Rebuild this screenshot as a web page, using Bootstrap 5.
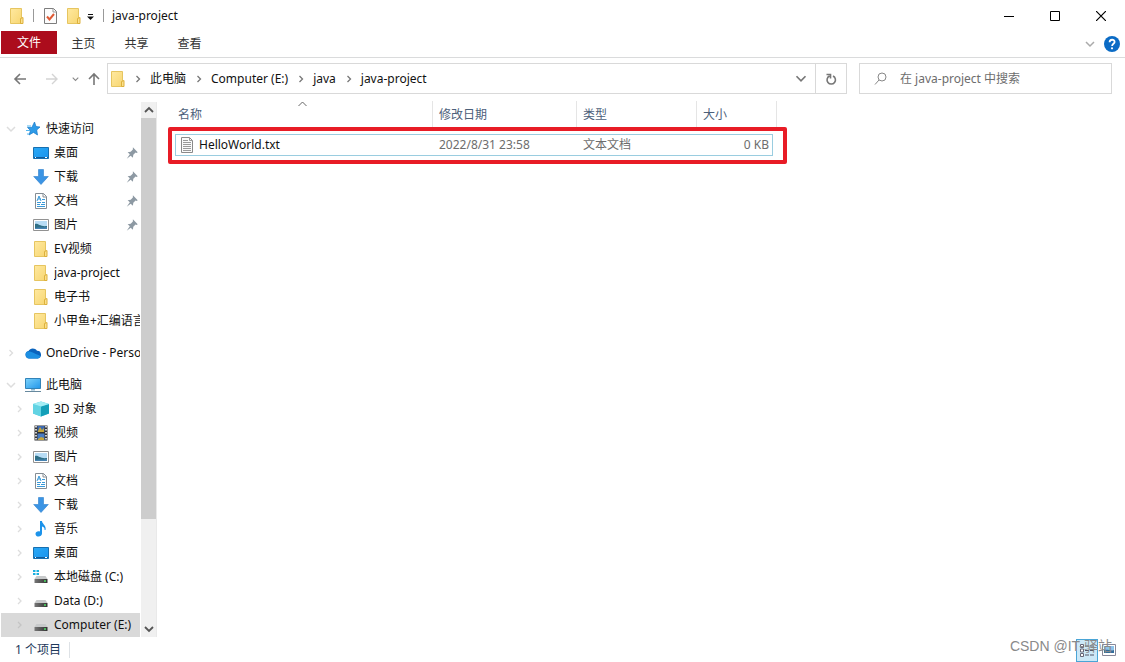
<!DOCTYPE html>
<html lang="zh-CN">
<head>
<meta charset="utf-8">
<meta name="viewport" content="width=device-width, initial-scale=1">
<title>java-project</title>
<link rel="stylesheet" href="https://cdn.jsdelivr.net/npm/bootstrap@5.3.0/dist/css/bootstrap.min.css">
<style>
body{font-family:"Noto Sans","Noto Sans CJK SC",sans-serif;font-size:12px;line-height:16px;color:#111;background:#fff}
button{border:0;background:transparent;padding:0;color:inherit}
a{color:inherit;text-decoration:none}
svg{display:block;flex:none}
.titlebar{height:31px;padding-left:9px;padding-right:1px}
.vsep{width:1px;height:13px;background:#999}
.winbtn{width:46px;height:31px}
.ribbon{height:27px;border-bottom:1px solid #dadbdc;padding-left:1px;color:#333}
.tabbtn{width:53px;height:25px}
.filebtn{width:56px;height:23px;background:#ac0c1c;color:#fff}
.addressbar{padding:5px 13px 4px 12px;gap:12px}
.navbtns{width:89px;margin-right:-6px}
.pathbox{height:31px;border:1px solid #d9d9d9}
.crumbs{gap:8px;padding-left:2px}
.crumbs a{margin-right:1px}
.refresh{width:31px;height:29px;border-left:1px solid #d9d9d9}
.searchbox{width:253px;height:31px;border:1px solid #d9d9d9;padding-left:14px}
.searchbox input{border:0;outline:0;background:transparent;font-size:12px;color:#6d6d6d;padding:0}
.searchbox input::placeholder{color:#6d6d6d;opacity:1}
.sidebar{width:141px;padding:19px 0 0 1px}
.treerow{height:24px;width:139px;padding-left:5px;overflow:hidden;white-space:nowrap}
.treerow .label{overflow:hidden;flex:1 1 0}
.treerow .main-icon{margin:0 5px 0 2px}
.treerow .root-icon{margin:0 5px 0 1px}
.child{padding-left:13px}
.treegroup{margin-bottom:8px}
.selected{background:#d9d9d9}
.pin{margin-right:1px}
.scroller{width:16px;margin:4px 0 1px;background:#f0f0f0;border-right:1px solid #e9e9e9}
.thumb{flex:400 0 0;background:#cdcdcd}
.track{flex:102 0 0}
.files{padding:3px 0 0 18px}
.filewrap{width:602px}
.filetable{width:602px;table-layout:fixed;border-collapse:separate;border-spacing:0}
.filetable th{height:27px;font-weight:400;color:#4c607a;border-right:1px solid #e5e5e5;padding:1px 6px 0 6px;vertical-align:middle}
.filetable th:first-child{padding-left:3px}
.filetable td{height:22px;padding:0 6px;color:#6d6d6d;vertical-align:middle}
.filetable td:first-child{padding-left:4px;color:#111}
.filetable td:last-child{padding-right:8px}
.filetable .gaprow td{height:6px}
.filerow{position:relative}
.filerow::after{content:"";position:absolute;inset:0 4px 0 0;border:1px solid #9acde0;pointer-events:none}
.sortmark{position:absolute;left:123px;top:0}
.marker{position:absolute;inset:26px -10px -8px -7px;border:4px solid #e81c26;border-radius:2px;pointer-events:none}
.statusbar{height:24px;padding:0 9px 0 15px;color:#1e395b}
.viewbtn{width:22px;height:23px;border:1px solid #4aa5d6;background:#cce8f7}
.watermark{position:absolute;right:13px;bottom:6px;font-family:"Liberation Sans","Noto Sans CJK SC",sans-serif;font-size:14px;line-height:20px;color:#8a8a8a;white-space:nowrap;pointer-events:none}
</style>
</head>
<body class="d-flex flex-column min-vh-100 position-relative">
<svg width="0" height="0" class="position-absolute" aria-hidden="true">
<defs>
<linearGradient id="gy" x1="0" y1="0" x2="1" y2="1"><stop offset="0" stop-color="#ffe9a0"/><stop offset="1" stop-color="#f7d672"/></linearGradient>
<linearGradient id="gb" x1="0" y1="0" x2="1" y2="1"><stop offset="0" stop-color="#2aa9f5"/><stop offset="1" stop-color="#1a93ee"/></linearGradient>
<linearGradient id="gp" x1="0" y1="0" x2="1" y2="1"><stop offset="0" stop-color="#7dd3fb"/><stop offset="1" stop-color="#2196ea"/></linearGradient>
<linearGradient id="gd" x1="0" y1="0" x2="1" y2="0"><stop offset="0" stop-color="#777"/><stop offset="1" stop-color="#333"/></linearGradient>
</defs>
<symbol id="folder" viewBox="0 0 16 16"><path d="M1.500.5h11v15h-11z" fill="url(#gy)" stroke="#e6c560"/><path d="M11.500 15.500v-5l2.500-1v6z" fill="#fbe08c" stroke="#ddb13c"/></symbol>
<symbol id="checkdoc" viewBox="0 0 16 16"><path d="M2.500.5h9l3 3v12h-12z" fill="#fcfcfc" stroke="#7d7d7d"/><path d="M11 .5v3.500h3.500" fill="none" stroke="#999"/><path d="M5 8.500l2.500 3L12 6" fill="none" stroke="#df5a35" stroke-width="2"/></symbol>
<symbol id="star" viewBox="0 0 16 16"><path d="M9.500 1l1.500 4.500 4 .5-3.300 3 .8 5-4-2.600L4 14l1.500-4.500L2.500 6.500h4.300z" fill="#2d9be8" stroke="#1779c8" stroke-width=".7"/><path d="M2 5h4M1 9.500h4M2 13h2" stroke="#53b6ef"/></symbol>
<symbol id="desktop" viewBox="0 0 16 16"><path d="M.5 2.500h15v11H.5z" fill="url(#gb)" stroke="#176fb0"/><path d="M1 12.500h14" stroke="#125a99"/><path d="M2 12.500h1m9 0h2" stroke="#fff"/></symbol>
<symbol id="down" viewBox="0 0 16 16"><path d="M5.500.5h5v7h4.800L8 15.500.7 7.500h4.800z" fill="#3b94e4" stroke="#2b7fcc" stroke-width=".6"/></symbol>
<symbol id="doc" viewBox="0 0 16 16"><path d="M2.500.5h8l3 3v12h-11z" fill="#fff" stroke="#848d94"/><path d="M10 .5v3.500h3.500" fill="none" stroke="#848d94"/><path d="M4 8l2-5 2 5M5 6h3M9 6.500h3M4 9.500h4m1 0h3M4 11.500h3m1 0h4M4 13.500h8" fill="none" stroke="#3a9ad9"/></symbol>
<symbol id="picture" viewBox="0 0 16 16"><path d="M.5 2.500h15v11H.5z" fill="#fff" stroke="#929292"/><path d="M2 4h12v8H2z" fill="#b7dcf5"/><path d="M2 7c3-1 5 3 12 2v3H2z" fill="#2e6f86"/><path d="M2 11c5-1 7 0 12-1v2H2z" fill="#4783b2"/></symbol>
<symbol id="cloud" viewBox="0 0 16 16"><path d="M4 13.500a3.800 3.800 0 0 1-.5-7.500A5 5 0 0 1 12 5.800a3.900 3.900 0 0 1 1 7.700z" fill="#0a63bd"/><path d="M4 13.500a4 4 0 0 1-2.500-6.500C5 5.500 8 8 15.500 11a3.500 3.500 0 0 1-2.500 2.500z" fill="#1c8fe2"/></symbol>
<symbol id="pc" viewBox="0 0 16 16"><path d="M.5 1.500h15v10H.5z" fill="url(#gp)" stroke="#3283b8"/><path d="M6 12h4v1.500H6z" fill="#8bb7d0"/><path d="M0 14.500h16" stroke="#67899e"/></symbol>
<symbol id="cube" viewBox="0 0 16 16"><path d="M0 3l8-2.500L16 3v9.500l-8 3-8-3z" fill="#40c8df"/><path d="M0 3l8 2.500v10l-8-3z" fill="#62d3e3"/><path d="M8 5.500L16 3v9.500l-8 3z" fill="#139fb8"/><path d="M0 3l8-2.500L16 3 8 5.500z" fill="#a3edf4"/></symbol>
<symbol id="film" viewBox="0 0 16 16"><path d="M1.500.5h13v15h-13z" fill="#333"/><path d="M4.500 1h7v6h-7z" fill="#3b68b0"/><path d="M4.500 8.500h7V15h-7z" fill="#467bc4"/><path d="M5 6l2-4 2 3 2-2v4H5zM5 14l3-2 3 1v2H5z" fill="#c4a53b"/><path d="M3 1v14M13 1v14" stroke="#fff" stroke-width="1.500" stroke-dasharray="1.500 1.500"/></symbol>
<symbol id="music" viewBox="0 0 16 16"><path d="M7 0h2c0 3 4.500 4 3.500 9h-1C12 6.500 10 6 9 5.500v7c0 4-6.500 4-6.500.5C2.500 10.500 5 9.800 7 10.500z" fill="#1c93ea"/></symbol>
<symbol id="drive" viewBox="0 0 16 16"><path d="M3.500 7h9l2 3H1.500z" fill="#c7c9ca"/><path d="M1.500 10h13v4h-13z" fill="url(#gd)"/><path d="M11 12h2" stroke="#4ee066" stroke-width="1.500"/></symbol>
<symbol id="winlogo" viewBox="0 0 16 16"><path d="M0 1h2.500v2H0zM3.500 1H6v2H3.500zM0 4h2.500v2H0zM3.500 4H6v2H3.500z" fill="#1cb0df"/></symbol>
<symbol id="pinicon" viewBox="0 0 16 16"><path d="M9 1.500l5.500 5.500-1 1-1.500-.5L9.500 10l-.5 3.500L6.500 11 2 14.500l3.500-5L3 7l3.500-.5L9 4z" fill="#8d99a3"/></symbol>
<symbol id="cr" viewBox="0 0 8 8"><path d="M2.500 1L5.500 4l-3 3" fill="none" stroke="currentColor" stroke-width="1.300"/></symbol>
<symbol id="cd" viewBox="0 0 10 8"><path d="M1 2l4 4 4-4" fill="none" stroke="currentColor" stroke-width="1.500"/></symbol>
</svg>

<header>
<div class="titlebar d-flex align-items-center">
<svg width="16" height="16"><use href="#folder"/></svg>
<span class="vsep mx-2"></span>
<svg width="16" height="16"><use href="#checkdoc"/></svg>
<svg width="16" height="16" class="ms-2"><use href="#folder"/></svg>
<button class="ms-1 me-2" aria-label="自定义快速访问工具栏"><svg width="9" height="10"><path d="M2 3.500h5" stroke="#111"/><path d="M1 5.500h7L4.500 9z" fill="#111"/></svg></button>
<span class="vsep"></span>
<span class="ms-2">java-project</span>
<div class="ms-auto d-flex">
<button class="winbtn" aria-label="最小化"><svg class="mx-auto" width="10" height="10"><path d="M0 5.500h10" stroke="#000"/></svg></button>
<button class="winbtn" aria-label="最大化"><svg class="mx-auto" width="10" height="10"><path d="M.5.5h9v9h-9z" fill="none" stroke="#000"/></svg></button>
<button class="winbtn" aria-label="关闭"><svg class="mx-auto" width="10" height="10"><path d="M0 0l10 10M10 0L0 10" stroke="#000" stroke-width="1.200"/></svg></button>
</div>
</div>
<nav class="ribbon d-flex align-items-start">
<button class="filebtn">文件</button><button class="tabbtn">主页</button><button class="tabbtn">共享</button><button class="tabbtn">查看</button>
<div class="ms-auto d-flex align-items-center pt-1 pe-1 gap-2">
<button aria-label="展开功能区"><svg width="10" height="8" color="#aaa"><use href="#cd"/></svg></button>
<button aria-label="帮助"><svg width="18" height="18" viewBox="0 0 18 18"><circle cx="9" cy="9" r="8" fill="#0b6bc5"/><path d="M6.600 7.200c0-3.200 5-3.200 5-.3 0 1.800-2.500 2-2.500 4" fill="none" stroke="#fff" stroke-width="1.800"/><circle cx="9" cy="13.300" r="1.100" fill="#fff"/></svg></button>
</div>
</nav>
<div class="addressbar d-flex align-items-center">
<div class="navbtns d-flex align-items-center justify-content-between">
<button aria-label="后退"><svg width="16" height="14"><path d="M14 7H3M8 2L3 7l5 5" fill="none" stroke="#777" stroke-width="1.600"/></svg></button>
<button class="ms-2" aria-label="前进"><svg width="16" height="14"><path d="M2 7h11M8 2l5 5-5 5" fill="none" stroke="#d4d4d4" stroke-width="1.400"/></svg></button>
<button class="ms-1" aria-label="最近浏览的位置"><svg width="7" height="6" color="#888"><use href="#cd"/></svg></button>
<button aria-label="上移"><svg width="14" height="14"><path d="M7 13V2M2 7l5-5 5 5" fill="none" stroke="#777" stroke-width="1.600"/></svg></button>
</div>
<div class="pathbox d-flex align-items-center flex-grow-1">
<div class="crumbs d-flex align-items-center flex-grow-1">
<svg width="16" height="16" class="me-n1"><use href="#folder"/></svg>
<svg width="8" height="8" color="#777"><use href="#cr"/></svg><a href="#">此电脑</a>
<svg width="8" height="8" color="#777"><use href="#cr"/></svg><a href="#">Computer (E:)</a>
<svg width="8" height="8" color="#777"><use href="#cr"/></svg><a href="#">java</a>
<svg width="8" height="8" color="#777"><use href="#cr"/></svg><a href="#">java-project</a>
</div>
<button class="px-2 me-0" aria-label="以前的位置"><svg width="12" height="9" color="#777"><use href="#cd"/></svg></button>
<button class="refresh" aria-label="刷新"><svg class="mx-auto" width="12" height="12"><path d="M8 3A4.200 4.200 0 1 1 4.500 3M1.500 1.500h4v4" fill="none" stroke="#777" stroke-width="1.600"/></svg></button>
</div>
<label class="searchbox d-flex align-items-center gap-2">
<svg width="14" height="14" class="me-1"><circle cx="8" cy="5" r="4" fill="none" stroke="#888"/><path d="M5 8l-4 4.500" stroke="#888"/></svg>
<input class="flex-grow-1" type="text" placeholder="在 java-project 中搜索" aria-label="搜索">
</label>
</div>
</header>

<main class="d-flex flex-grow-1">
<nav class="sidebar">
<div class="treegroup">
<a href="#" class="treerow d-flex align-items-center"><svg width="10" height="8" color="#ddd" class="me-2"><use href="#cd"/></svg><svg width="16" height="16" class="root-icon"><use href="#star"/></svg><span class="label">快速访问</span></a>
<a href="#" class="treerow child d-flex align-items-center"><svg width="11" height="8"></svg><svg class="main-icon ms-2" width="16" height="16"><use href="#desktop"/></svg><span class="label">桌面</span><svg class="pin" width="14" height="14"><use href="#pinicon"/></svg></a>
<a href="#" class="treerow child d-flex align-items-center"><svg width="11" height="8"></svg><svg class="main-icon ms-2" width="16" height="16"><use href="#down"/></svg><span class="label">下载</span><svg class="pin" width="14" height="14"><use href="#pinicon"/></svg></a>
<a href="#" class="treerow child d-flex align-items-center"><svg width="11" height="8"></svg><svg class="main-icon ms-2" width="16" height="16"><use href="#doc"/></svg><span class="label">文档</span><svg class="pin" width="14" height="14"><use href="#pinicon"/></svg></a>
<a href="#" class="treerow child d-flex align-items-center"><svg width="11" height="8"></svg><svg class="main-icon ms-2" width="16" height="16"><use href="#picture"/></svg><span class="label">图片</span><svg class="pin" width="14" height="14"><use href="#pinicon"/></svg></a>
<a href="#" class="treerow child d-flex align-items-center"><svg width="11" height="8"></svg><svg class="main-icon ms-2" width="16" height="16"><use href="#folder"/></svg><span class="label">EV视频</span></a>
<a href="#" class="treerow child d-flex align-items-center"><svg width="11" height="8"></svg><svg class="main-icon ms-2" width="16" height="16"><use href="#folder"/></svg><span class="label">java-project</span></a>
<a href="#" class="treerow child d-flex align-items-center"><svg width="11" height="8"></svg><svg class="main-icon ms-2" width="16" height="16"><use href="#folder"/></svg><span class="label">电子书</span></a>
<a href="#" class="treerow child d-flex align-items-center"><svg width="11" height="8"></svg><svg class="main-icon ms-2" width="16" height="16"><use href="#folder"/></svg><span class="label">小甲鱼+汇编语言</span></a>
</div>
<div class="treegroup">
<a href="#" class="treerow d-flex align-items-center"><svg width="10" height="8" color="#ddd" class="me-2"><use href="#cr"/></svg><svg width="16" height="16" class="root-icon"><use href="#cloud"/></svg><span class="label">OneDrive - Personal</span></a>
</div>
<a href="#" class="treerow d-flex align-items-center"><svg width="10" height="8" color="#ddd" class="me-2"><use href="#cd"/></svg><svg width="16" height="16" class="root-icon"><use href="#pc"/></svg><span class="label">此电脑</span></a>
<a href="#" class="treerow child d-flex align-items-center"><svg width="11" height="8" color="#ddd"><use href="#cr"/></svg><svg class="main-icon ms-2" width="16" height="16"><use href="#cube"/></svg><span class="label">3D 对象</span></a>
<a href="#" class="treerow child d-flex align-items-center"><svg width="11" height="8" color="#ddd"><use href="#cr"/></svg><svg class="main-icon ms-2" width="16" height="16"><use href="#film"/></svg><span class="label">视频</span></a>
<a href="#" class="treerow child d-flex align-items-center"><svg width="11" height="8" color="#ddd"><use href="#cr"/></svg><svg class="main-icon ms-2" width="16" height="16"><use href="#picture"/></svg><span class="label">图片</span></a>
<a href="#" class="treerow child d-flex align-items-center"><svg width="11" height="8" color="#ddd"><use href="#cr"/></svg><svg class="main-icon ms-2" width="16" height="16"><use href="#doc"/></svg><span class="label">文档</span></a>
<a href="#" class="treerow child d-flex align-items-center"><svg width="11" height="8" color="#ddd"><use href="#cr"/></svg><svg class="main-icon ms-2" width="16" height="16"><use href="#down"/></svg><span class="label">下载</span></a>
<a href="#" class="treerow child d-flex align-items-center"><svg width="11" height="8" color="#ddd"><use href="#cr"/></svg><svg class="main-icon ms-2" width="16" height="16"><use href="#music"/></svg><span class="label">音乐</span></a>
<a href="#" class="treerow child d-flex align-items-center"><svg width="11" height="8" color="#ddd"><use href="#cr"/></svg><svg class="main-icon ms-2" width="16" height="16"><use href="#desktop"/></svg><span class="label">桌面</span></a>
<a href="#" class="treerow child d-flex align-items-center"><svg width="11" height="8" color="#ddd"><use href="#cr"/></svg><svg class="main-icon ms-2" width="16" height="16"><use href="#drive"/><use href="#winlogo"/></svg><span class="label">本地磁盘 (C:)</span></a>
<a href="#" class="treerow child d-flex align-items-center"><svg width="11" height="8" color="#ddd"><use href="#cr"/></svg><svg class="main-icon ms-2" width="16" height="16"><use href="#drive"/></svg><span class="label">Data (D:)</span></a>
<a href="#" class="treerow child selected d-flex align-items-center"><svg width="11" height="8" color="#c4c4c4"><use href="#cr"/></svg><svg class="main-icon ms-2" width="16" height="16"><use href="#drive"/></svg><span class="label">Computer (E:)</span></a>
</nav>
<div class="scroller d-flex flex-column">
<button class="py-1" aria-label="向上滚动"><svg class="mx-auto" width="10" height="8"><path d="M1 6l4-4 4 4" fill="none" stroke="#555" stroke-width="1.800"/></svg></button>
<div class="thumb"></div><div class="track"></div>
<button class="py-1" aria-label="向下滚动"><svg class="mx-auto" width="10" height="8"><path d="M1 2l4 4 4-4" fill="none" stroke="#555" stroke-width="1.800"/></svg></button>
</div>
<section class="files flex-grow-1">
<div class="filewrap position-relative">
<table class="filetable">
<colgroup><col style="width:258px"><col style="width:144px"><col style="width:120px"><col style="width:80px"></colgroup>
<thead><tr><th>名称</th><th>修改日期</th><th>类型</th><th>大小</th></tr></thead>
<tbody>
<tr class="gaprow"><td colspan="4"></td></tr>
<tr class="filerow">
<td><div class="d-flex align-items-center gap-1"><svg width="16" height="16"><path d="M2.500.5h8l3 3v12h-11z" fill="#fafafa" stroke="#8a8a8a"/><path d="M10.500.5v3h3M4 3.500h5M4 5.500h8M4 7.500h8M4 9.500h8M4 11.500h8M4 13.500h8" fill="none" stroke="#9a9a9a"/></svg><a href="#">HelloWorld.txt</a></div></td>
<td>2022/8/31 23:58</td><td>文本文档</td><td class="text-end">0 KB</td>
</tr>
</tbody>
</table>
<svg class="sortmark" width="9" height="6"><path d="M.5 5l4-4 4 4" fill="none" stroke="#666"/></svg>
<div class="marker"></div>
</div>
</section>
</main>

<footer class="statusbar d-flex align-items-center">
<span>1 个项目</span>
<span class="border-start ms-2 ps-2">&nbsp;</span>
<div class="ms-auto d-flex align-items-center gap-1">
<button class="viewbtn" aria-label="详细信息"><svg class="mx-auto" width="16" height="13"><path d="M1.500.5h3v3h-3zM1.500 5h3v3h-3zM1.500 9.500h3v3h-3z" fill="#fff" stroke="#667"/><path d="M6 2h4m1 0h4M6 6.500h4m1 0h4M6 11h4m1 0h4" stroke="#556"/></svg></button>
<button aria-label="大图标"><svg width="14" height="12"><path d="M.5.5h13v11H.5z" fill="#fff" stroke="#889"/><path d="M2 2h10v4H2z" fill="#8cc4ea"/><path d="M2 6c4-1 6 1 10 0v3H2z" fill="#316e9c"/></svg></button>
</div>
</footer>
<div class="watermark">CSDN @IT-驿站</div>
<script src="https://cdn.jsdelivr.net/npm/bootstrap@5.3.0/dist/js/bootstrap.bundle.min.js"></script>
</body>
</html>
